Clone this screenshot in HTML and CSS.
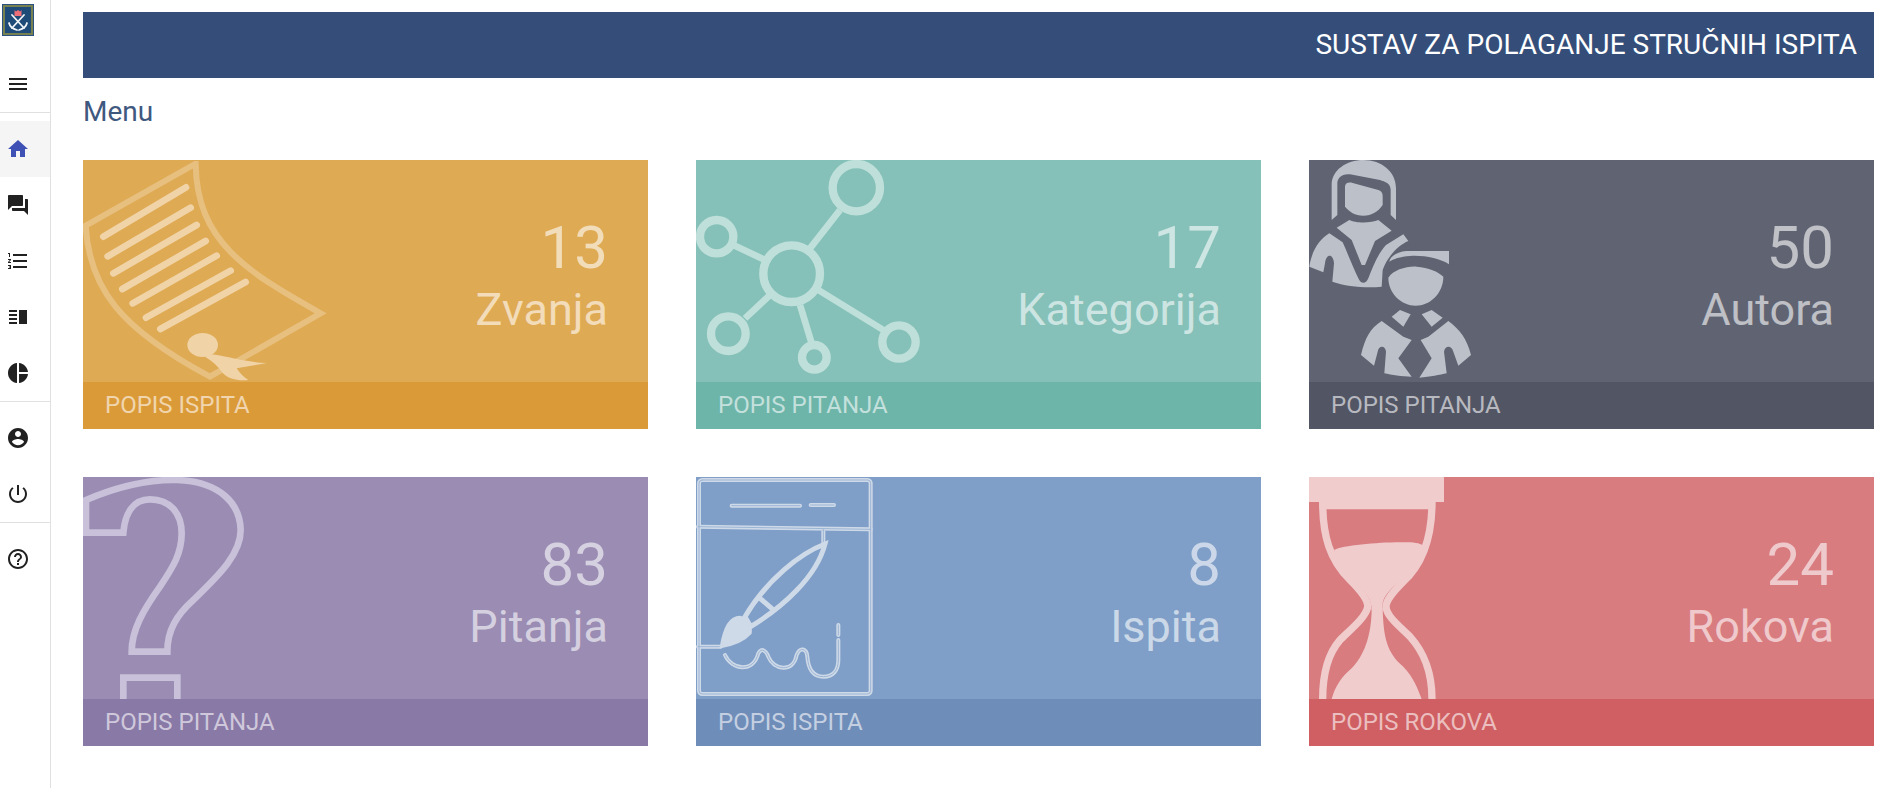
FILE: index.html
```html
<!DOCTYPE html>
<html lang="hr">
<head>
<meta charset="utf-8">
<title>Sustav za polaganje stručnih ispita</title>
<link rel="stylesheet" href="styles.css">
</head>
<body>
<div class="app">
  <aside class="sidebar">
    <div class="logo">
      <svg viewBox="0 0 32 32" width="32" height="32">
        <rect x="0.5" y="0.5" width="31" height="31" fill="#1f4b78" stroke="#2a5180"/>
        <rect x="2" y="2" width="28" height="28" fill="none" stroke="#77804f" stroke-width="2"/>
        <path d="M12.5 6l1.5 1.5L16 6l2 1.500L19.500 6v6h-7z" fill="#ee6f78"/>
        <g fill="none" stroke="#f2f5f7" stroke-width="1.800" stroke-linecap="round">
          <path d="M10 11l12 13M22 11L10 24"/>
          <path d="M7 19c1 4 4 6 8 7M25 19c-1 4-4 6-8 7"/>
        </g>
      </svg>
    </div>
    <div class="menu-btn">
      <svg class="icon" viewBox="0 0 24 24"><path d="M3 18h18v-2H3v2zm0-5h18v-2H3v2zm0-7v2h18V6H3z"/></svg>
    </div>
    <nav class="group first">
      <a class="item active"><svg class="icon" viewBox="0 0 24 24"><path d="M10 20v-6h4v6h5v-8h3L12 3 2 12h3v8z"/></svg></a>
      <a class="item"><svg class="icon" viewBox="0 0 24 24"><path d="M21 6h-2v9H6v2c0 .55.45 1 1 1h11l4 4V7c0-.55-.45-1-1-1zm-4 6V3c0-.55-.45-1-1-1H3c-.55 0-1 .45-1 1v14l4-4h10c.55 0 1-.45 1-1z"/></svg></a>
      <a class="item"><svg class="icon" viewBox="0 0 24 24"><path d="M2 17h2v.5H3v1h1v.5H2v1h3v-4H2v1zm1-9h1V4H2v1h1v3zm-1 3h1.800L2 13.100v.9h3v-1H3.200L5 10.900V10H2v1zm5-6v2h14V5H7zm0 14h14v-2H7v2zm0-6h14v-2H7v2z"/></svg></a>
      <a class="item"><svg class="icon" viewBox="0 0 24 24"><path d="M3 15h8v-2H3v2zm0 4h8v-2H3v2zm0-8h8V9H3v2zm0-6v2h8V5H3zm10 0h8v14h-8V5z"/></svg></a>
      <a class="item"><svg class="icon" viewBox="0 0 24 24"><path d="M11 2v20c-5.070-.5-9-4.790-9-10s3.930-9.500 9-10zm2.030 0v8.990H22c-.47-4.740-4.240-8.520-8.970-8.990zm0 11.010V22c4.740-.47 8.500-4.250 8.970-8.990h-8.970z"/></svg></a>
    </nav>
    <nav class="group">
      <a class="item"><svg class="icon" viewBox="0 0 24 24"><path d="M12 2C6.480 2 2 6.480 2 12s4.480 10 10 10 10-4.480 10-10S17.520 2 12 2zm0 3c1.660 0 3 1.340 3 3s-1.340 3-3 3-3-1.340-3-3 1.340-3 3-3zm0 14.200c-2.500 0-4.710-1.280-6-3.220.03-1.990 4-3.080 6-3.080 1.990 0 5.970 1.090 6 3.080-1.290 1.940-3.500 3.220-6 3.220z"/></svg></a>
      <a class="item"><svg class="icon" viewBox="0 0 24 24"><path d="M13 3h-2v10h2V3zm4.830 2.170l-1.420 1.420C17.990 7.860 19 9.810 19 12c0 3.870-3.130 7-7 7s-7-3.130-7-7c0-2.190 1.010-4.140 2.580-5.420L6.170 5.170C4.230 6.820 3 9.260 3 12c0 4.970 4.030 9 9 9s9-4.030 9-9c0-2.740-1.230-5.180-3.170-6.830z"/></svg></a>
    </nav>
    <nav class="group">
      <a class="item"><svg class="icon" viewBox="0 0 24 24"><path d="M11 18h2v-2h-2v2zm1-16C6.480 2 2 6.480 2 12s4.480 10 10 10 10-4.480 10-10S17.520 2 12 2zm0 18c-4.410 0-8-3.590-8-8s3.590-8 8-8 8 3.590 8 8-3.590 8-8 8zm0-14c-2.210 0-4 1.790-4 4h2c0-1.100.9-2 2-2s2 .9 2 2c0 2-3 1.750-3 5h2c0-2.250 3-2.500 3-5 0-2.210-1.790-4-4-4z"/></svg></a>
    </nav>
  </aside>

  <main class="main">
    <header class="banner">SUSTAV ZA POLAGANJE STRUČNIH ISPITA</header>
    <h1 class="title">Menu</h1>
    <section class="grid">

      <article class="card orange">
        <svg class="art" viewBox="9 15 900 666">
          <g fill="none" stroke="#fff" stroke-opacity=".25" stroke-width="18">
            <path d="M345 27L17 212C28 400 120 520 390 665L722 475C500 350 350 260 347 27Z"/>
          </g>
          <g stroke="#f0d3a7" stroke-width="20" stroke-linecap="round">
            <path d="M70 245L318 97M83 304L332 158M100 355L350 210M127 402L377 258M158 445L410 302M198 488L452 347M241 522L497 381"/>
          </g>
          <ellipse cx="368" cy="570" rx="46" ry="36" fill="#f0d3a7"/>
          <path d="M395 598C430 600 480 620 560 624C520 632 485 636 470 640C480 655 490 665 505 675C470 678 440 670 425 650C415 635 400 620 375 605Z" fill="#f0d3a7"/>
        </svg>
        <div class="body"><div class="num">13</div><div class="label">Zvanja</div></div>
        <div class="foot">POPIS ISPITA</div>
      </article>

      <article class="card teal">
        <svg class="art" viewBox="18 15 900 666">
          <g fill="none" stroke="#bfe0da" stroke-width="25">
            <circle cx="499" cy="98" r="71"/>
            <circle cx="80" cy="245" r="50"/>
            <circle cx="305" cy="356" r="85"/>
            <circle cx="115" cy="536" r="52"/>
            <circle cx="373" cy="607" r="37"/>
            <circle cx="627" cy="561" r="50"/>
          </g>
          <g stroke="#bfe0da" stroke-width="20">
            <path d="M360 280L450 165M130 270L225 315M165 490L240 420M330 450L365 565M385 405L580 525"/>
          </g>
        </svg>
        <div class="body"><div class="num">17</div><div class="label">Kategorija</div></div>
        <div class="foot">POPIS PITANJA</div>
      </article>

      <article class="card slate">
        <svg class="art" viewBox="27 15 900 666">
          <g fill="#bcc0c9">
            <path d="M95 195L95 90C95 45 140 15 190 15C245 15 288 50 288 100L288 195L272 180L272 105C272 85 255 80 240 75L150 58C125 55 112 70 112 85L112 180Z"/>
            <path d="M135 95C135 85 145 80 158 84L235 105C245 108 248 115 248 125L248 150C235 170 215 182 190 182C165 182 148 170 135 155Z"/>
            <path d="M148 195C165 205 215 205 235 195L275 227L225 258L195 330L185 330L155 255L110 218Z"/>
            <path d="M28 335C35 290 55 255 88 235L128 262C145 300 160 340 175 370C183 388 197 388 205 370C220 330 235 295 258 270L310 238L325 258C295 270 262 305 248 345L245 395C200 400 140 395 97 380L102 325C100 295 78 295 75 325L70 352Z"/>
            <path d="M268 320C270 305 290 290 320 288L447 288L447 328C420 310 370 300 330 303C300 305 280 312 268 320Z"/>
            <path d="M265 368C280 345 320 333 350 335C385 337 415 350 430 365C430 415 390 452 347 452C305 452 265 415 265 368Z"/>
            <path d="M275 485L300 465L332 478L310 515Z"/>
            <path d="M365 478L395 465L428 488L395 515Z"/>
            <path d="M183 600C195 550 210 520 245 498L310 545L335 555L295 610L335 665C305 665 275 660 253 655L258 590C256 570 236 570 233 590L222 632Z"/>
            <path d="M513 600C500 550 480 525 445 498L385 545L362 555L395 610L358 668C390 665 420 660 440 655L432 590C435 570 455 570 460 590L475 632Z"/>
          </g>
        </svg>
        <div class="body"><div class="num">50</div><div class="label">Autora</div></div>
        <div class="foot">POPIS PITANJA</div>
      </article>

      <article class="card purple">
        <svg class="art" viewBox="9 21 900 666">
          <g fill="none" stroke="#c8c1d9" stroke-width="20">
            <path d="M18 90C100 55 190 28 290 30C420 35 480 100 482 180C482 260 400 330 340 390C290 435 262 480 262 545L155 545C155 480 190 420 240 350C280 290 305 250 305 190C305 130 270 88 210 88C160 88 135 130 130 188L18 188Z"/>
            <path d="M130 700L130 623L292 623L292 700"/>
          </g>
        </svg>
        <div class="body"><div class="num">83</div><div class="label">Pitanja</div></div>
        <div class="foot">POPIS PITANJA</div>
      </article>

      <article class="card blue">
        <svg class="art" viewBox="18 21 900 666">
          <defs>
            <g id="lines">
              <rect x="27" y="30" width="515" height="642" rx="10"/>
              <path d="M24 170L542 178M400 178L400 222M24 530L92 530"/>
              <path d="M125 107L330 107M362 105L432 105"/>
              <path d="M105 555C125 600 190 610 205 550C215 530 230 545 235 560C250 600 310 610 320 555C330 530 350 535 352 560C355 600 370 620 400 620C430 620 445 600 445 570L445 510M445 465L445 495"/>
            </g>
          </defs>
          <g fill="none" stroke-linecap="round">
            <use href="#lines" stroke="#cfdae8" stroke-width="12"/>
            <use href="#lines" stroke="#9db5d5" stroke-width="3"/>
            <g stroke="#cfdae8" stroke-width="15">
              <path d="M405 222C330 250 230 330 165 440L182 470C280 410 380 320 405 222Z"/>
              <path d="M210 385L245 415"/>
            </g>
          </g>
          <path d="M92 532C100 480 115 440 150 440C175 445 185 470 182 490C160 515 130 525 92 532Z" fill="#cfdae8" stroke="#cfdae8" stroke-width="6"/>
        </svg>
        <div class="body"><div class="num">8</div><div class="label">Ispita</div></div>
        <div class="foot">POPIS ISPITA</div>
      </article>

      <article class="card red">
        <svg class="art" viewBox="27 21 900 666">
          <g fill="#f0cccc">
            <path d="M27 21H432V96H396V118H68V96H27Z"/>
            <path d="M102 240C130 225 250 215 320 217C350 217 365 222 370 228C365 260 330 310 280 350C250 380 245 395 248 420H215C215 390 200 370 170 340C135 310 110 270 102 240Z"/>
            <path d="M215 415H248C250 500 260 550 310 590C340 620 355 660 365 687H95C105 650 125 620 155 595C190 560 215 500 215 415Z"/>
          </g>
          <g fill="none" stroke="#f0cccc" stroke-width="22">
            <path d="M68 96C68 200 90 270 150 330C190 370 205 395 203 412C195 445 150 480 120 510C85 550 68 610 68 687"/>
            <path d="M396 96C396 200 370 280 310 335C280 365 258 390 258 410C260 440 300 470 330 500C370 545 396 600 396 687"/>
          </g>
        </svg>
        <div class="body"><div class="num">24</div><div class="label">Rokova</div></div>
        <div class="foot">POPIS ROKOVA</div>
      </article>

    </section>
  </main>
</div>
</body>
</html>
```

FILE: styles.css
```css
* { box-sizing: border-box; }

html, body {
  margin: 0;
  height: 100%;
  background: #fff;
  overflow: hidden;
}

body {
  font-family: Roboto, "Liberation Sans", sans-serif;
}

.app {
  display: flex;
  height: 788px;
}

.sidebar {
  width: 51px;
  flex: none;
  border-right: 1px solid #e0e0e0;
  display: flex;
  flex-direction: column;
}

.logo {
  height: 56px;
  padding: 4px 0 0 2px;
}

.logo svg { display: block; }

.menu-btn {
  height: 56px;
  display: flex;
  align-items: center;
  padding-left: 6px;
}

.group {
  border-top: 1px solid #e0e0e0;
  padding-top: 8px;
}

.item {
  height: 56px;
  display: flex;
  align-items: center;
  padding-left: 6px;
}

.item.active { background: #f5f5f5; }
.item.active .icon { fill: #3f51b5; }

.icon {
  width: 24px;
  height: 24px;
  fill: #212121;
  display: block;
}

.main {
  flex: 1;
  padding: 12px 19px 0 32px;
}

.banner {
  height: 66px;
  background: #344e79;
  color: #fff;
  font-size: 28px;
  line-height: 66px;
  text-align: right;
  padding-right: 17px;
}

.title {
  margin: 0;
  height: 82px;
  padding-top: 19px;
  font-size: 28px;
  line-height: 30px;
  font-weight: 400;
  color: #3f5880;
}

.grid {
  display: grid;
  grid-template-columns: repeat(3, 565px);
  grid-auto-rows: 269px;
  gap: 48px;
}

.card {
  position: relative;
  overflow: hidden;
  display: flex;
  flex-direction: column;
}

.art {
  position: absolute;
  left: 0;
  top: 0;
  width: 300px;
  height: 222px;
}

.body {
  position: relative;
  flex: 1;
  text-align: right;
  padding: 53px 40px 0 0;
  color: rgba(255, 255, 255, 0.6);
}

.num {
  font-size: 60px;
  line-height: 70px;
}

.label {
  font-size: 45px;
  line-height: 54px;
}

.foot {
  position: relative;
  height: 47px;
  line-height: 47px;
  padding-left: 22px;
  font-size: 24px;
  color: rgba(255, 255, 255, 0.6);
}

.orange { background: #dfaa54; }
.orange .foot { background: #db9a38; }
.teal { background: #85c1b8; }
.teal .foot { background: #6db5a9; }
.slate { background: #606472; }
.slate .foot { background: #515564; }
.purple { background: #9a8cb3; }
.purple .foot { background: #8979a7; }
.blue { background: #7f9fc8; }
.blue .foot { background: #6f8db9; }
.red { background: #d87c80; }
.red .foot { background: #cf5f62; }
```
